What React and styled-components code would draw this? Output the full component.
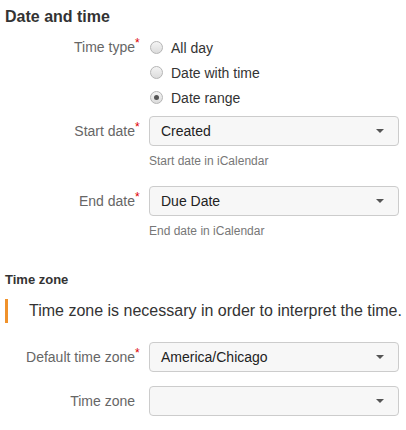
import React from 'react'
import styled, { createGlobalStyle } from 'styled-components'

const Global = createGlobalStyle`
body {
  margin: 0;
  background: #fff;
  font-family: "Liberation Sans", Arial, sans-serif;
  color: #333;
}
`

const Page = styled.div`
width: 406px;
padding: 0 5px;
box-sizing: border-box;
`

const SectionTitle = styled.h2`
margin: 7px 0 0;
font-size: 16px;
line-height: 20px;
font-weight: bold;
color: #333;
`

const SubTitle = styled.h3`
margin: 33px 0 0;
font-size: 13px;
line-height: 18px;
font-weight: bold;
color: #333;
`

const Row = styled.div`
display: grid;
grid-template-columns: 136px 250px;
column-gap: 8px;
align-items: ${p => (p.$top ? 'start' : 'center')};
margin-top: ${p => p.$mt}px;
`

const Label = styled.div`
text-align: right;
font-size: 14px;
line-height: ${p => (p.$top ? '25px' : '20px')};
color: #666;
white-space: nowrap;
`

const Star = styled.sup`
display: inline-block;
width: 6px;
color: #d00;
font-size: 12px;
line-height: 0;
vertical-align: 5px;
visibility: ${p => (p.$hidden ? 'hidden' : 'visible')};
text-align: left;
`

const RadioList = styled.div`
display: flex;
flex-direction: column;
`

const RadioRow = styled.label`
display: flex;
align-items: center;
gap: 8px;
height: 25px;
font-size: 14px;
color: #333;
`

const RadioDot = styled.span`
width: 11px;
height: 11px;
border-radius: 50%;
border: 1px solid #b5b5b5;
background: linear-gradient(#f4f4f4, #dcdcdc);
display: flex;
align-items: center;
justify-content: center;
margin-left: 1px;
&::after {
  content: '';
  width: 5px;
  height: 5px;
  border-radius: 50%;
  background: #555;
  display: ${p => (p.$checked ? 'block' : 'none')};
}
`

const Select = styled.div`
height: 30px;
box-sizing: border-box;
border: 1px solid #ccc;
border-radius: 4px;
background: #f7f7f7;
display: flex;
align-items: center;
justify-content: space-between;
padding: 0 14px 0 11px;
font-size: 14px;
color: #222;
`

const Caret = styled.span`
width: 0;
height: 0;
border-left: 4px solid transparent;
border-right: 4px solid transparent;
border-top: 4px solid #555;
`

const Help = styled.div`
grid-column: 2;
margin-top: 8px;
font-size: 12px;
line-height: 14px;
color: #777;
`

const Callout = styled.div`
margin-top: 10px;
border-left: 3px solid #f0922b;
padding-left: 21px;
font-size: 16px;
line-height: 24px;
color: #333;
white-space: nowrap;
`

const Field = ({ label, required, children, mt, top }) => (
  <Row $mt={mt} $top={top}>
    <Label $top={top}>
      {label}
      <Star $hidden={!required}>*</Star>
    </Label>
    <div>{children}</div>
  </Row>
)

const Dropdown = ({ value }) => (
  <Select>
    <span>{value}</span>
    <Caret />
  </Select>
)

const App = () => {
  const types = [
    { id: 1, name: 'All day' },
    { id: 2, name: 'Date with time' },
    { id: 3, name: 'Date range', checked: true },
  ]
  return (
    <Page>
      <Global />
      <SectionTitle>Date and time</SectionTitle>

      <Field label="Time type" required mt={8} top>
        <RadioList>
          {types.map(t => (
            <RadioRow key={t.id}>
              <RadioDot $checked={t.checked} />
              {t.name}
            </RadioRow>
          ))}
        </RadioList>
      </Field>

      <Field label="Start date" required mt={6}>
        <Dropdown value="Created" />
      </Field>
      <Row $mt={0}>
        <Help>Start date in iCalendar</Help>
      </Row>

      <Field label="End date" required mt={18}>
        <Dropdown value="Due Date" />
      </Field>
      <Row $mt={0}>
        <Help>End date in iCalendar</Help>
      </Row>

      <SubTitle>Time zone</SubTitle>
      <Callout>Time zone is necessary in order to interpret the time.</Callout>

      <Field label="Default time zone" required mt={19}>
        <Dropdown value="America/Chicago" />
      </Field>
      <Field label="Time zone" mt={14}>
        <Dropdown value="" />
      </Field>
    </Page>
  )
}

export default App
